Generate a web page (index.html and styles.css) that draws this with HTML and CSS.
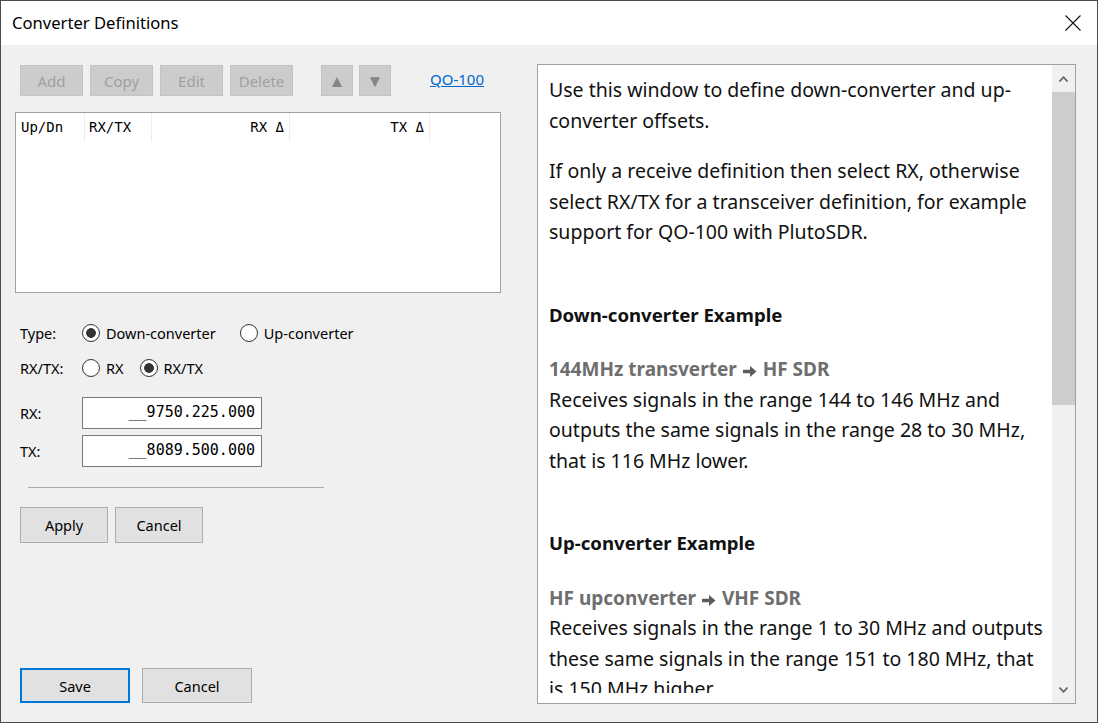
FILE: index.html
```html
<!DOCTYPE html>
<html lang="en">
<head>
  <meta charset="UTF-8" />
  <title>Converter Definitions</title>
  <link rel="stylesheet" href="styles.css">
</head>
<body>

  <div class="window">

    <!-- ───── title bar ───── -->
    <div class="titlebar">
      <span class="title">Converter Definitions</span>
      <button class="close-btn" aria-label="Close">
        <svg width="16" height="16" viewBox="0 0 16 16">
          <path d="M0.5 0.5 L15.5 15.5 M15.5 0.5 L0.5 15.5" stroke="#111" stroke-width="1.1" fill="none"/>
        </svg>
      </button>
    </div>

    <div class="main">

      <!-- ───── left: definitions editor ───── -->
      <div class="editor">

        <div class="toolbar">
          <button class="tool-btn" disabled>Add</button>
          <button class="tool-btn" disabled>Copy</button>
          <button class="tool-btn" disabled>Edit</button>
          <button class="tool-btn" disabled>Delete</button>
          <button class="tool-btn arrow first-arrow" disabled>&#9650;</button>
          <button class="tool-btn arrow" disabled>&#9660;</button>
          <a class="preset-link" href="#">QO-100</a>
        </div>

        <div class="list">
          <div class="list-head">
            <span class="col col-dir">Up/Dn</span>
            <span class="col col-mode">RX/TX</span>
            <span class="col col-rx">RX &Delta;</span>
            <span class="col col-tx">TX &Delta;</span>
          </div>
        </div>

        <div class="field-row type-row">
          <span class="field-label">Type:</span>
          <label class="radio"><input type="radio" name="type" checked>Down-converter</label>
          <label class="radio gap-l"><input type="radio" name="type">Up-converter</label>
        </div>

        <div class="field-row mode-row">
          <span class="field-label">RX/TX:</span>
          <label class="radio"><input type="radio" name="mode">RX</label>
          <label class="radio gap-s"><input type="radio" name="mode" checked>RX/TX</label>
        </div>

        <!-- masked frequency boxes, underscores are unused digit slots -->
        <div class="field-row freq-row">
          <span class="field-label">RX:</span>
          <span class="freq" contenteditable="true">__9750.225.000</span>
        </div>
        <div class="field-row freq-row tx">
          <span class="field-label">TX:</span>
          <span class="freq" contenteditable="true">__8089.500.000</span>
        </div>

        <hr class="divider">

        <div class="btn-row">
          <button class="btn">Apply</button>
          <button class="btn">Cancel</button>
        </div>

        <div class="btn-row footer">
          <button class="btn wide default">Save</button>
          <button class="btn wide">Cancel</button>
        </div>
      </div>

      <!-- ───── right: help text ───── -->
      <div class="help">
        <div class="help-text">
          <p>Use this window to define down-converter and up-converter offsets.</p>
          <p>If only a receive definition then select RX, otherwise select RX/TX for a transceiver definition, for example support for QO-100 with PlutoSDR.</p>

          <h4>Down-converter Example</h4>
          <p><span class="sub">144MHz transverter
               <svg class="arr" width="14" height="11" viewBox="0 0 14 11"><path d="M0 3.7 H7 V0 L13.5 5.5 L7 11 V7.3 H0 Z" fill="#5c5c5c"/></svg>
               HF SDR</span><br>
             Receives signals in the range 144 to 146 MHz and outputs the same signals in the range 28 to 30 MHz, that is 116 MHz lower.</p>

          <h4>Up-converter Example</h4>
          <p><span class="sub">HF upconverter
               <svg class="arr" width="14" height="11" viewBox="0 0 14 11"><path d="M0 3.7 H7 V0 L13.5 5.5 L7 11 V7.3 H0 Z" fill="#5c5c5c"/></svg>
               VHF SDR</span><br>
             Receives signals in the range 1 to 30 MHz and outputs these same signals in the range 151 to 180 MHz, that is 150 MHz higher.</p>
        </div>

        <div class="scrollbar">
          <div class="sb-arrow">
            <svg width="9" height="6" viewBox="0 0 9 6"><path d="M0.5 5.5 L4.5 1.2 L8.5 5.5" stroke="#606060" stroke-width="1.6" fill="none"/></svg>
          </div>
          <div class="sb-track">
            <div class="sb-thumb"></div>
          </div>
          <div class="sb-arrow">
            <svg width="9" height="6" viewBox="0 0 9 6"><path d="M0.5 0.5 L4.5 4.8 L8.5 0.5" stroke="#606060" stroke-width="1.6" fill="none"/></svg>
          </div>
        </div>
      </div>

    </div>
  </div>

</body>
</html>
```

FILE: styles.css
```css
:root {
  --c-text:      #000000;
  --c-muted:     #a0a0a0;
  --c-sub:       #6e6e6e;
  --c-link:      #0066cc;
  --c-focus:     #0078d7;
  --c-border:    #a0a0a0;
  --c-edge:      #4c4c4c;

  --bg-window:   #f0f0f0;
  --bg-title:    #ffffff;
  --bg-btn:      #e1e1e1;
  --bg-btn-off:  #cccccc;
  --bg-thumb:    #cdcdcd;

  --font-ui:   "Noto Sans", "Open Sans", sans-serif;
  --font-mono: "DejaVu Sans Mono", "Liberation Mono", monospace;
}

* { box-sizing: border-box; }

body {
  margin: 0;
  font-family: var(--font-ui);
  color: var(--c-text);
}

/* ───── window frame ───── */
.window {
  width: 1098px;
  height: 723px;
  border: 1px solid var(--c-edge);
  background: var(--bg-window);
  display: flex;
  flex-direction: column;
}

.titlebar {
  height: 44px;
  background: var(--bg-title);
  display: flex;
  align-items: center;
  justify-content: space-between;
  padding: 0 16px 0 11px;
  flex-shrink: 0;
}
.title {
  font-size: 16.6px;
  position: relative;
  top: -1px;
}
.close-btn {
  border: none;
  background: none;
  padding: 0;
  width: 16px;
  height: 16px;
  display: flex;
}

.main {
  flex: 1;
  display: flex;
  padding: 0 21px 17px 14px;
}

/* ───── left column ───── */
.editor {
  width: 486px;
  display: flex;
  flex-direction: column;
  padding: 20px 0 2px;
  font-size: 14.5px;
}

.toolbar {
  display: flex;
  align-items: flex-start;
  padding-left: 5px;
  gap: 7px;
  height: 31px;
}

button {
  font-family: var(--font-ui);
  font-size: 14.5px;
  color: var(--c-text);
  cursor: pointer;
}

.tool-btn {
  width: 63px;
  height: 31px;
  padding: 0;
  border: 1px solid #c4c4c4;
  background: var(--bg-btn-off);
  color: var(--c-muted);
  font-size: 15px;
}
.tool-btn.arrow {
  width: 32px;
  font-size: 17px;
  line-height: 1;
  color: #858585;
  margin-left: -1px;
}
.tool-btn.first-arrow { margin-left: 21px; }

.preset-link {
  margin: 4px 0 0 32px;
  color: var(--c-link);
  font-size: 15px;
}

.list {
  margin-top: 16px;
  height: 181px;
  background: #fff;
  border: 1px solid var(--c-border);
}
.list-head {
  display: flex;
  height: 29px;
  font-family: var(--font-mono);
  font-size: 14px;
  line-height: 28px;
}
.col {
  border-right: 1px solid #ececec;
  padding: 0 5px;
  white-space: pre;
}
.col-dir  { width: 69px; }
.col-mode { width: 67px; padding-left: 4px; }
.col-rx   { width: 138px; text-align: right; }
.col-tx   { width: 140px; text-align: right; }

/* ───── form rows ───── */
.field-row {
  display: flex;
  align-items: center;
  padding-left: 5px;
  height: 24px;
}
.type-row { margin-top: 28px; }
.mode-row { margin-top: 11px; }
.freq-row { margin-top: 17px; height: 32px; }
.freq-row.tx { margin-top: 6px; }

.field-label { width: 62px; }

.radio {
  display: flex;
  align-items: center;
  gap: 6px;
}
.radio.gap-l { margin-left: 24px; }
.radio.gap-s { margin-left: 16px; }

.radio input {
  appearance: none;
  margin: 0;
  width: 18px;
  height: 18px;
  border: 1px solid #333;
  border-radius: 50%;
  background: #fff;
}
.radio input:checked {
  background: radial-gradient(circle, #333 0 4.5px, #fff 5.2px);
}

.freq {
  width: 180px;
  height: 32px;
  border: 1px solid #7a7a7a;
  background: #fff;
  font-family: var(--font-mono);
  font-size: 15px;
  line-height: 29px;
  text-align: right;
  padding: 0 6px;
  outline: none;
  white-space: pre;
}

.divider {
  width: 296px;
  margin: 20px 0 0 13px;
  border: none;
  border-top: 1px solid #a8a8a8;
}

.btn-row {
  display: flex;
  gap: 7px;
  padding-left: 5px;
  margin-top: 19px;
}
.btn {
  width: 88px;
  height: 36px;
  padding: 0;
  border: 1px solid #adadad;
  background: var(--bg-btn);
}
.btn.wide { width: 110px; height: 35px; }

.footer {
  margin-top: auto;
  gap: 12px;
}
.btn.default { border: 2px solid var(--c-focus); }

/* ───── help pane ───── */
.help {
  margin: 19px 0 0 36px;
  width: 539px;
  height: 640px;
  background: #fff;
  border: 1px solid var(--c-border);
  display: flex;
}

.help-text {
  flex: 1;
  overflow: hidden;
  margin-bottom: 10px;
  padding: 10px 2px 0 11px;
  font-size: 19.5px;
  line-height: 30.5px;
  color: #111;
}
.help-text p { margin: 0 0 20px; }
.help-text h4 {
  margin: 52px 0 24px;
  font-size: 18.6px;
  font-weight: bold;
}
.sub {
  font-weight: bold;
  font-size: 19px;
  color: var(--c-sub);
}
.arr {
  vertical-align: -1px;
  margin: 0 1px;
}

/* ───── fake scrollbar ───── */
.scrollbar {
  width: 23px;
  background: #f0f0f0;
  display: flex;
  flex-direction: column;
}
.sb-arrow {
  height: 27px;
  display: flex;
  align-items: center;
  justify-content: center;
}
.sb-track {
  flex: 1;
}
.sb-thumb {
  height: 313px;
  background: var(--bg-thumb);
}
```
